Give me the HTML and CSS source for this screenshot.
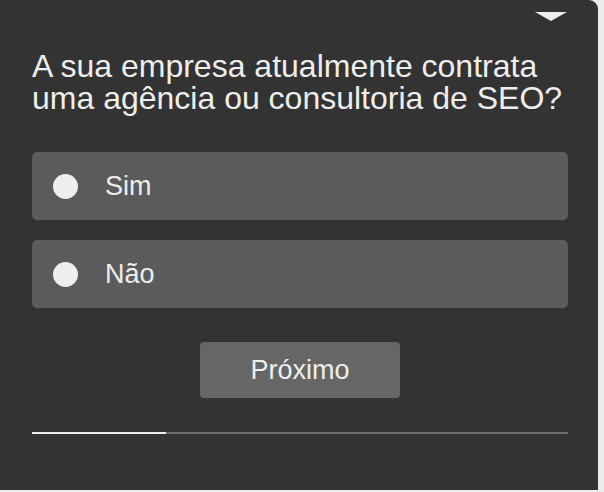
FILE: index.html
```html
<!DOCTYPE html>
<html lang="pt">
<head>
    <meta charset="UTF-8">
    <title>Pesquisa</title>
    <link rel="stylesheet" href="styles.css">
</head>
<body>
<div class="panel">
    <button class="collapse" aria-label="Minimizar">
        <svg width="32" height="9" viewBox="0 0 32 9"><polygon points="0,0 32,0 16,9" fill="#eeeeee"/></svg>
    </button>
    <h1 class="question">A sua empresa atualmente contrata uma agência ou consultoria de SEO?</h1>
    <div class="options">
        <label class="option"><span class="radio"></span>Sim</label>
        <label class="option"><span class="radio"></span>Não</label>
    </div>
    <div class="actions">
        <button class="next">Próximo</button>
    </div>
    <div class="progress"><div class="progress-fill" style="width: 25%;"></div></div>
</div>
</body>
</html>
```

FILE: styles.css
```css
body {
    margin: 0;
    background-color: #ececec;
    font-family: "Liberation Sans", Arial, sans-serif;
}
.panel {
    position: relative;
    box-sizing: border-box;
    width: 598px;
    height: 490px;
    padding: 50px 30px 0 32px;
    background-color: #333333;
    border-top-right-radius: 9px;
    color: #eeeeee;
}
.collapse {
    position: absolute;
    top: 12px;
    right: 31px;
    padding: 0;
    border: none;
    background: none;
    line-height: 0;
}
.question {
    margin: 0 0 38px 0;
    font-size: 32px;
    font-weight: normal;
    line-height: 32px;
}
.options {
    display: flex;
    flex-direction: column;
    gap: 20px;
}
.option {
    display: flex;
    align-items: center;
    height: 68px;
    padding-left: 21px;
    background-color: #5b5b5b;
    border-radius: 5px;
    font-size: 27px;
}
.radio {
    width: 25px;
    height: 25px;
    margin-right: 27px;
    border-radius: 50%;
    background-color: #eeeeee;
}
.actions {
    display: flex;
    justify-content: center;
    margin-top: 34px;
}
.next {
    width: 200px;
    height: 56px;
    border: none;
    border-radius: 4px;
    background-color: #666666;
    color: #eeeeee;
    font-family: "Liberation Sans", Arial, sans-serif;
    font-size: 27px;
}
.progress {
    margin-top: 34px;
    height: 2px;
    background-color: #6e6e6e;
}
.progress-fill {
    height: 100%;
    background-color: #eeeeee;
}
```
